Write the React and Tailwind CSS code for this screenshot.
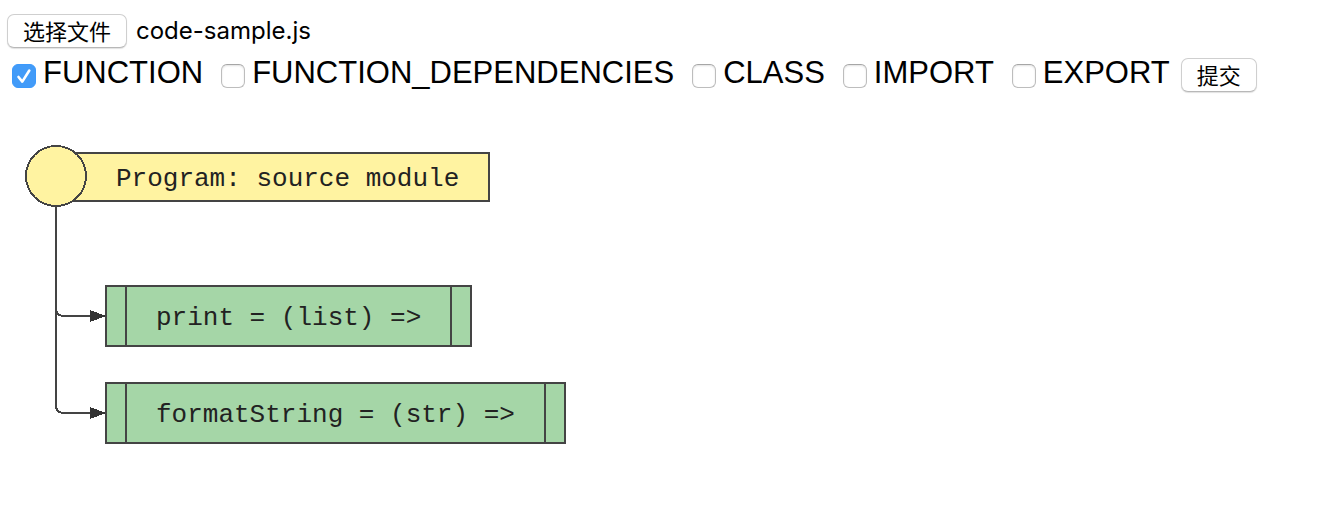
import { useRef, useState } from "react";

const OPTIONS = ["FUNCTION", "FUNCTION_DEPENDENCIES", "CLASS", "IMPORT", "EXPORT"];

const BUTTON =
  "h-[34px] shrink-0 rounded-[7px] border border-[#cfcfcf] border-b-[#b8b8b8] bg-white px-[15px] pb-0.5 text-[22px] leading-7 text-black shadow-[0_1px_1px_rgba(0,0,0,0.12)] font-['Noto_Sans_CJK_SC',sans-serif]";

function Option({ name, defaultChecked }) {
  return (
    <label className="flex items-center gap-[7px]">
      <span className="relative mt-1.5 block size-6">
        <input
          type="checkbox"
          name={name}
          defaultChecked={defaultChecked}
          className="peer block size-6 appearance-none rounded-[6px] border border-[#bdbdbd] border-t-[#a6a6a6] bg-white shadow-[inset_0_1px_2px_rgba(0,0,0,0.12)] checked:border-[#3b99fc] checked:bg-[#429bf8] checked:shadow-none"
        />
        <svg
          viewBox="0 0 24 24"
          className="pointer-events-none absolute inset-0 hidden size-6 peer-checked:block"
          fill="none"
          stroke="white"
          strokeWidth="2.6"
          strokeLinecap="round"
          strokeLinejoin="round"
          aria-hidden="true"
        >
          <path d="M6.5 13 10.3 17.6 17.3 6.5" />
        </svg>
      </span>
      <span className="text-[31px] leading-9">{name}</span>
    </label>
  );
}

function FunctionNode({ y, width, text }) {
  return (
    <g>
      <rect x="106" y={y} width={width} height="60" fill="#a5d6a7" />
      <path d={`M126 ${y}v60M${106 + width - 20} ${y}v60`} />
      <text x="156" y={y + 39} fill="#222" stroke="none">
        {text}
      </text>
    </g>
  );
}

function Flowchart() {
  return (
    <svg
      width="600"
      height="360"
      viewBox="0 100 600 360"
      className="mt-2 block max-w-full font-['Liberation_Mono',monospace] text-[26px]"
      fill="none"
      stroke="#444"
      strokeWidth="2"
      shapeRendering="crispEdges"
      role="img"
      aria-label="Program flowchart"
    >
      <path d="M56 176V308Q56 316 64 316H106" />
      <path d="M56 176V405Q56 413 64 413H106" />
      <path d="M90 310 106 316 90 322ZM90 407 106 413 90 419Z" fill="#333" stroke="none" />
      <rect x="56" y="153" width="433" height="48" fill="#fff3a1" />
      <circle cx="56" cy="176" r="30" fill="#fff3a1" />
      <text x="116" y="186" fill="#222" stroke="none">
        Program: source module
      </text>
      <FunctionNode y={286} width={365} text="print = (list) =>" />
      <FunctionNode y={383} width={459} text="formatString = (str) =>" />
    </svg>
  );
}

export default function App() {
  const picker = useRef(null);
  const [fileName, setFileName] = useState("code-sample.js");

  return (
    <main className="bg-white pt-3.5 text-black font-['Liberation_Sans',Arial,sans-serif]">
      <form onSubmit={(e) => e.preventDefault()}>
        <div className="flex items-center gap-[9px] pl-[7px]">
          <button type="button" className={BUTTON} onClick={() => picker.current.click()}>
            选择文件
          </button>
          <input
            ref={picker}
            type="file"
            hidden
            aria-label="选择文件"
            onChange={(e) => e.target.files[0] && setFileName(e.target.files[0].name)}
          />
          <span className="text-2xl leading-8 font-['Inter',sans-serif]">{fileName}</span>
        </div>
        <div className="flex flex-wrap items-center gap-x-[11px] pt-1.5 pl-3">
          <div className="flex flex-wrap items-center gap-x-[18px]">
            {OPTIONS.map((name, i) => (
              <Option key={name} name={name} defaultChecked={i === 0} />
            ))}
          </div>
          <button type="submit" className={`${BUTTON} mt-1`}>
            提交
          </button>
        </div>
      </form>
      <Flowchart />
    </main>
  );
}
